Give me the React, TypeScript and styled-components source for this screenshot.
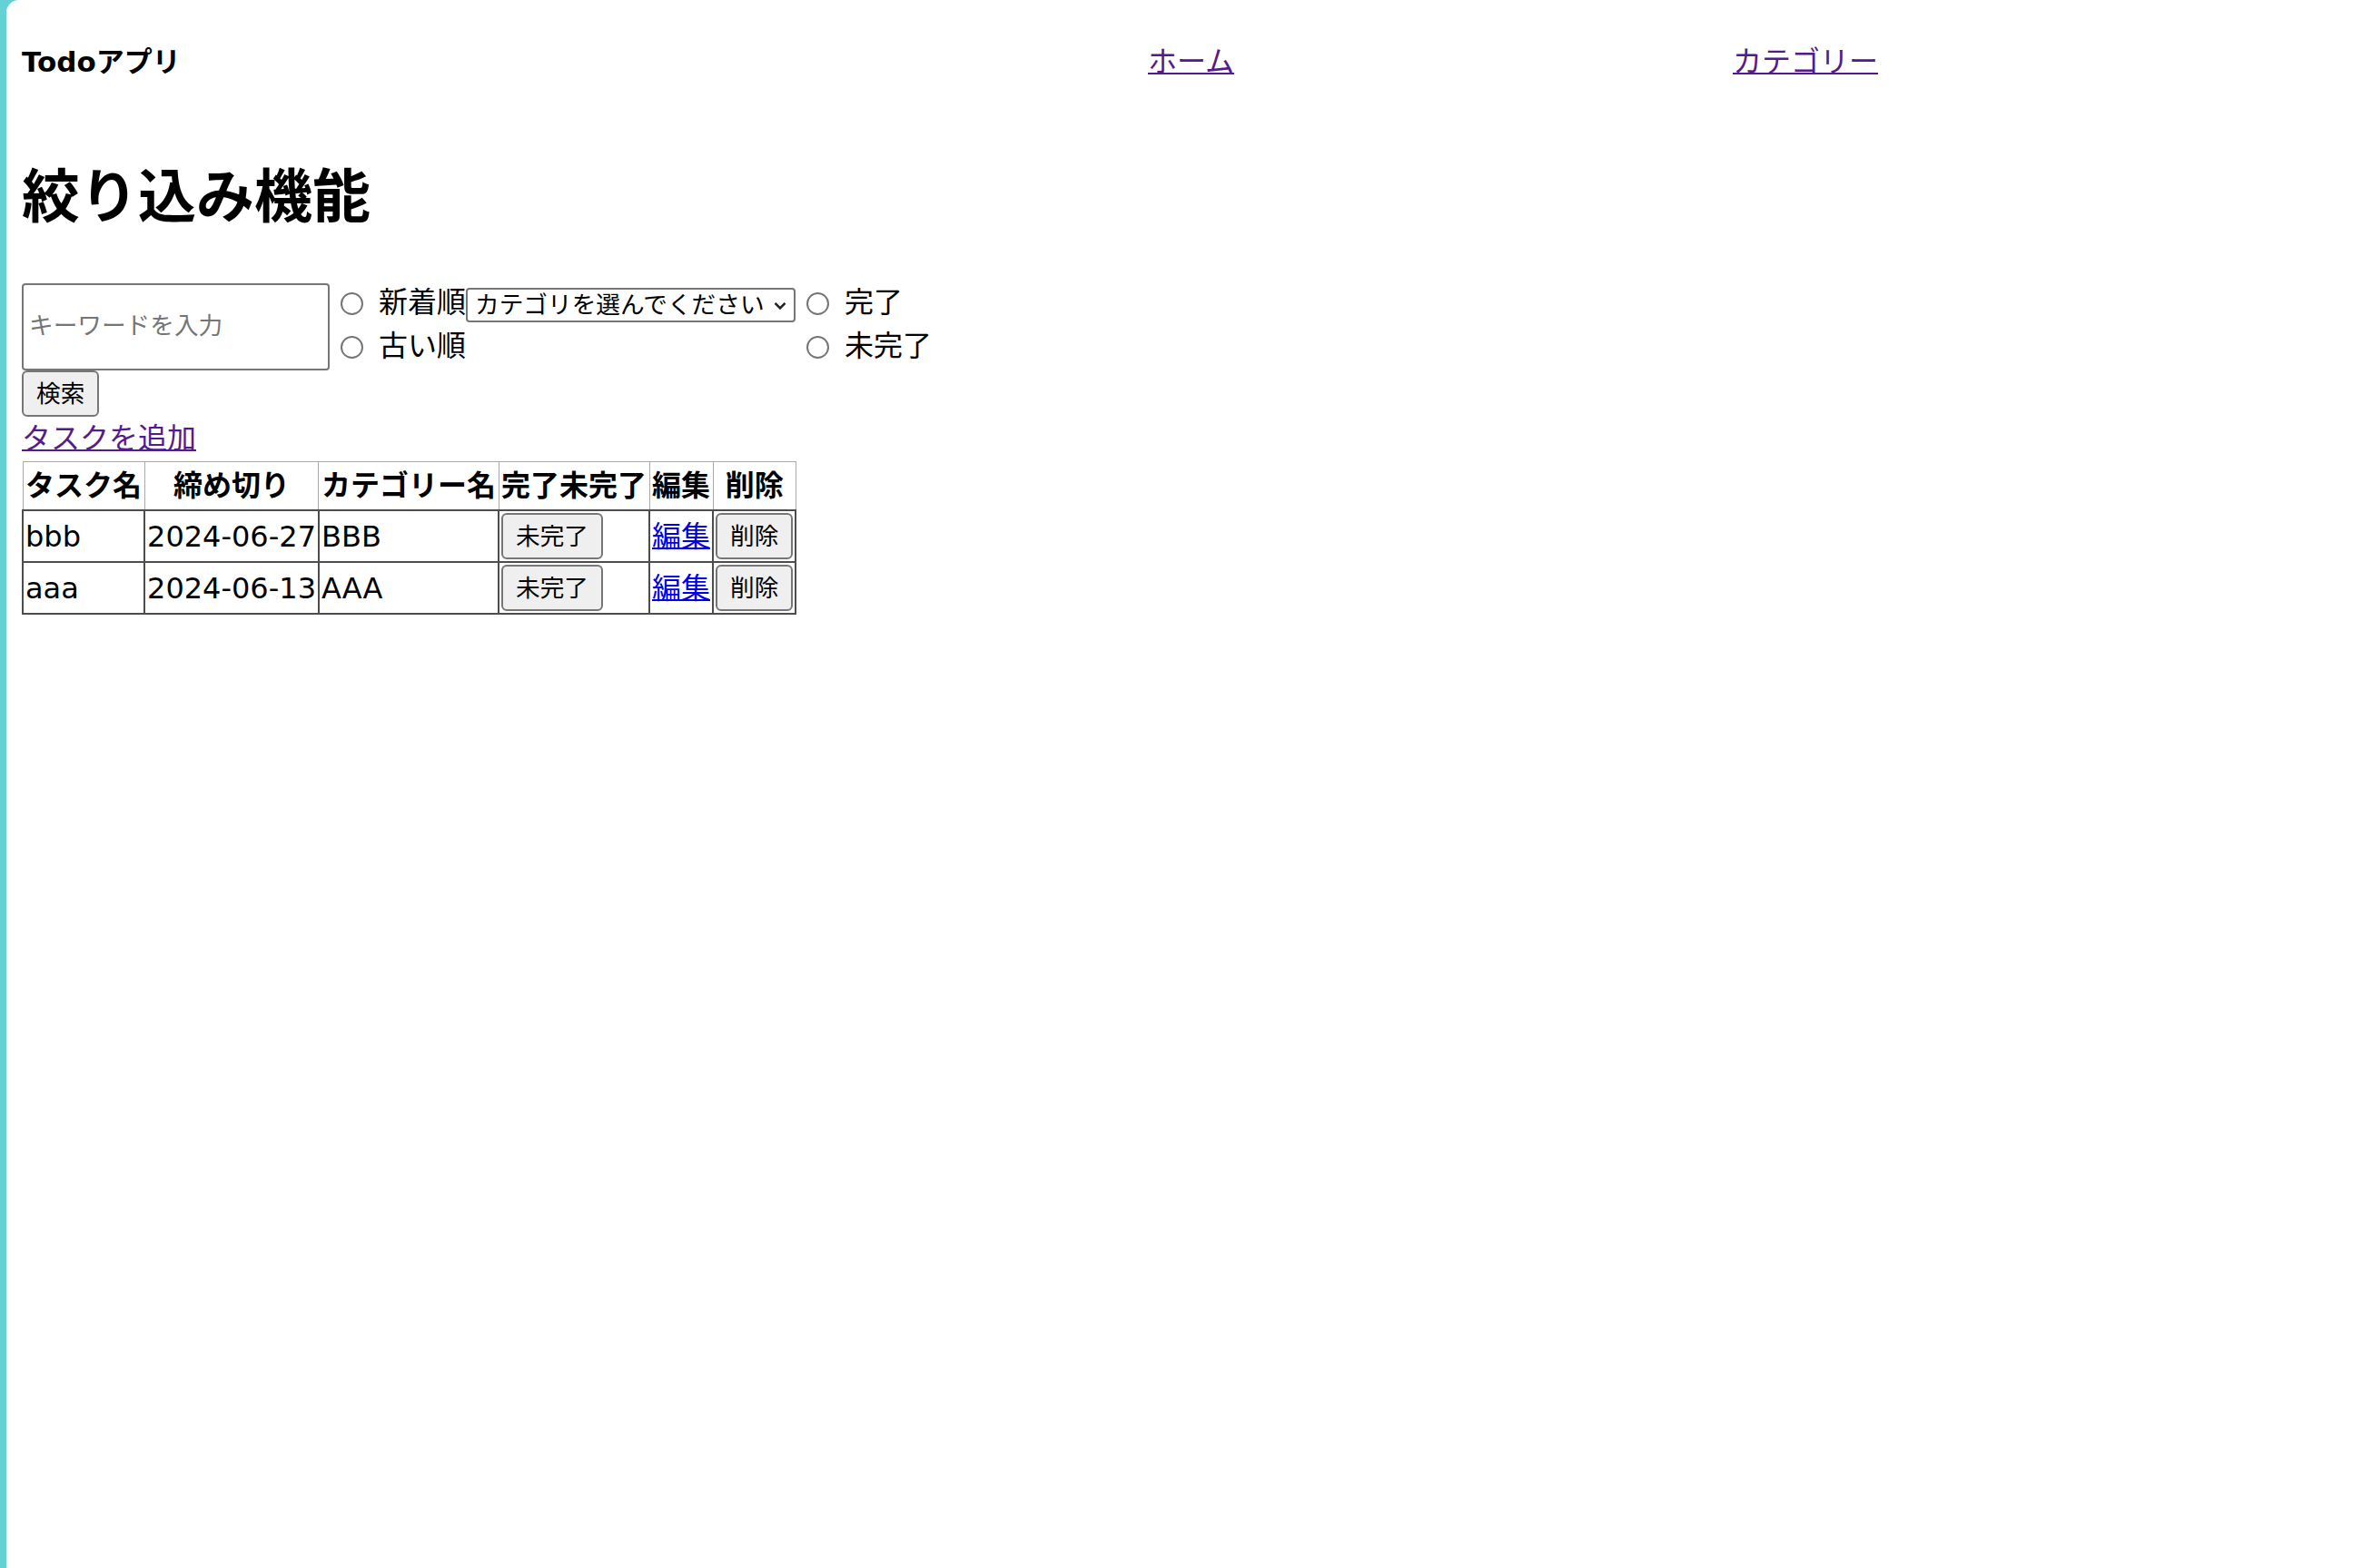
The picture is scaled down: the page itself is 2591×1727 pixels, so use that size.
import React from "react";
import styled, { createGlobalStyle } from "styled-components";

const GlobalStyle = createGlobalStyle`
  html, body { margin: 0; padding: 0; }
  body {
    background: #62d2d4;
    font-family: "DejaVu Sans", "Noto Sans CJK JP", sans-serif;
    color: #000;
  }
`;

const Page = styled.div`
  margin-left: 7px;
  min-height: 100vh;
  background: #fff;
  border-top-left-radius: 14px;
  padding: 16px 17px;
  box-sizing: border-box;
`;

const Header = styled.header`
  display: grid;
  grid-template-columns: 1240px 644px 1fr;
  align-items: baseline;
  padding: 28px 0;
`;

const Title = styled.div`
  font-size: 31px;
  font-weight: bold;
  line-height: 48px;
`;

const NavLink = styled.a`
  justify-self: start;
  font-size: 32px;
  line-height: 48px;
  color: #551a8b;
  text-decoration: underline;
  text-decoration-thickness: 2px;
`;

const Heading = styled.h1`
  font-size: 64px;
  font-weight: bold;
  line-height: 96px;
  margin: 49px 0 47px;
`;

const FilterRow = styled.div`
  display: flex;
  align-items: stretch;
`;

const KeywordInput = styled.input`
  width: 339px;
  box-sizing: border-box;
  border: 2px solid #767676;
  border-radius: 4px;
  padding: 0 6px 4px;
  font-size: 26.67px;
  font-family: inherit;
  color: #000;
  &::placeholder {
    color: #757575;
  }
`;

const RadioGroup = styled.div`
  display: flex;
  flex-direction: column;
`;

const RadioLabel = styled.label`
  display: flex;
  align-items: center;
  box-sizing: border-box;
  height: 48px;
  padding-bottom: 6px;
  font-size: 32px;
  line-height: 42px;
`;

const Radio = styled.input`
  appearance: none;
  width: 25px;
  height: 25px;
  box-sizing: border-box;
  border: 2px solid #767676;
  border-radius: 50%;
  background: #fff;
  margin: 2px 17px 0 12px;
`;

const SelectWrap = styled.div`
  position: relative;
  align-self: flex-start;
  margin-top: 5px;
`;

const Select = styled.select`
  appearance: none;
  width: 363px;
  height: 38px;
  box-sizing: border-box;
  border: 2px solid #767676;
  border-radius: 4px;
  padding: 0 30px 0 8px;
  font-size: 26.67px;
  font-family: inherit;
  line-height: 34px;
  background: #fff;
  color: #000;
`;

const Chevron = styled.svg`
  position: absolute;
  right: 10px;
  top: 50%;
  transform: translateY(-40%);
  pointer-events: none;
`;

const Button = styled.button<{ $block?: boolean }>`
  display: ${(p) => (p.$block ? "block" : "inline-block")};
  font-size: 26.67px;
  font-family: inherit;
  line-height: 43px;
  padding: 2px 14px;
  border: 2px solid #767676;
  border-radius: 6px;
  background: #efefef;
  color: #000;
  margin: 0;
`;

const LinkLine = styled.div`
  font-size: 32px;
  line-height: 48px;
`;

const TextLink = styled.a<{ $visited?: boolean }>`
  color: ${(p) => (p.$visited ? "#551a8b" : "#0000ee")};
  text-decoration: underline;
  text-decoration-thickness: 2px;
`;

const Table = styled.table`
  border-collapse: collapse;
  font-size: 32px;
  line-height: 48px;
  margin-top: 1px;
`;

const Th = styled.th`
  border: 1px solid #a9a9a9;
  padding: 2px 2.5px;
  font-weight: bold;
  white-space: nowrap;
`;

const Td = styled.td`
  border: 2px solid #4d4d4d;
  padding: 2px;
  white-space: nowrap;
  vertical-align: middle;
`;

const tasks = [
  { name: "bbb", deadline: "2024-06-27", category: "BBB" },
  { name: "aaa", deadline: "2024-06-13", category: "AAA" },
];

export default function App() {
  return (
    <>
      <GlobalStyle />
      <Page>
        <Header>
          <Title>Todoアプリ</Title>
          <NavLink href="#">ホーム</NavLink>
          <NavLink href="#">カテゴリー</NavLink>
        </Header>
        <Heading>絞り込み機能</Heading>
        <FilterRow>
          <KeywordInput type="text" placeholder="キーワードを入力" />
          <RadioGroup>
            <RadioLabel>
              <Radio type="radio" name="order" />
              新着順
            </RadioLabel>
            <RadioLabel>
              <Radio type="radio" name="order" />
              古い順
            </RadioLabel>
          </RadioGroup>
          <SelectWrap>
            <Select defaultValue="">
              <option value="">カテゴリを選んでください</option>
              <option value="AAA">AAA</option>
              <option value="BBB">BBB</option>
            </Select>
            <Chevron width="14" height="9" viewBox="0 0 14 9">
              <polyline
                points="1.5,1.5 7,7 12.5,1.5"
                fill="none"
                stroke="#222"
                strokeWidth="2.6"
              />
            </Chevron>
          </SelectWrap>
          <RadioGroup>
            <RadioLabel>
              <Radio type="radio" name="done" />
              完了
            </RadioLabel>
            <RadioLabel>
              <Radio type="radio" name="done" />
              未完了
            </RadioLabel>
          </RadioGroup>
        </FilterRow>
        <Button $block>検索</Button>
        <LinkLine>
          <TextLink href="#" $visited>
            タスクを追加
          </TextLink>
        </LinkLine>
        <Table>
          <thead>
            <tr>
              <Th>タスク名</Th>
              <Th>締め切り</Th>
              <Th>カテゴリー名</Th>
              <Th>完了未完了</Th>
              <Th>編集</Th>
              <Th>削除</Th>
            </tr>
          </thead>
          <tbody>
            {tasks.map((t) => (
              <tr key={t.name}>
                <Td>{t.name}</Td>
                <Td>{t.deadline}</Td>
                <Td>{t.category}</Td>
                <Td>
                  <Button>未完了</Button>
                </Td>
                <Td>
                  <TextLink href="#">編集</TextLink>
                </Td>
                <Td>
                  <Button>削除</Button>
                </Td>
              </tr>
            ))}
          </tbody>
        </Table>
      </Page>
    </>
  );
}
